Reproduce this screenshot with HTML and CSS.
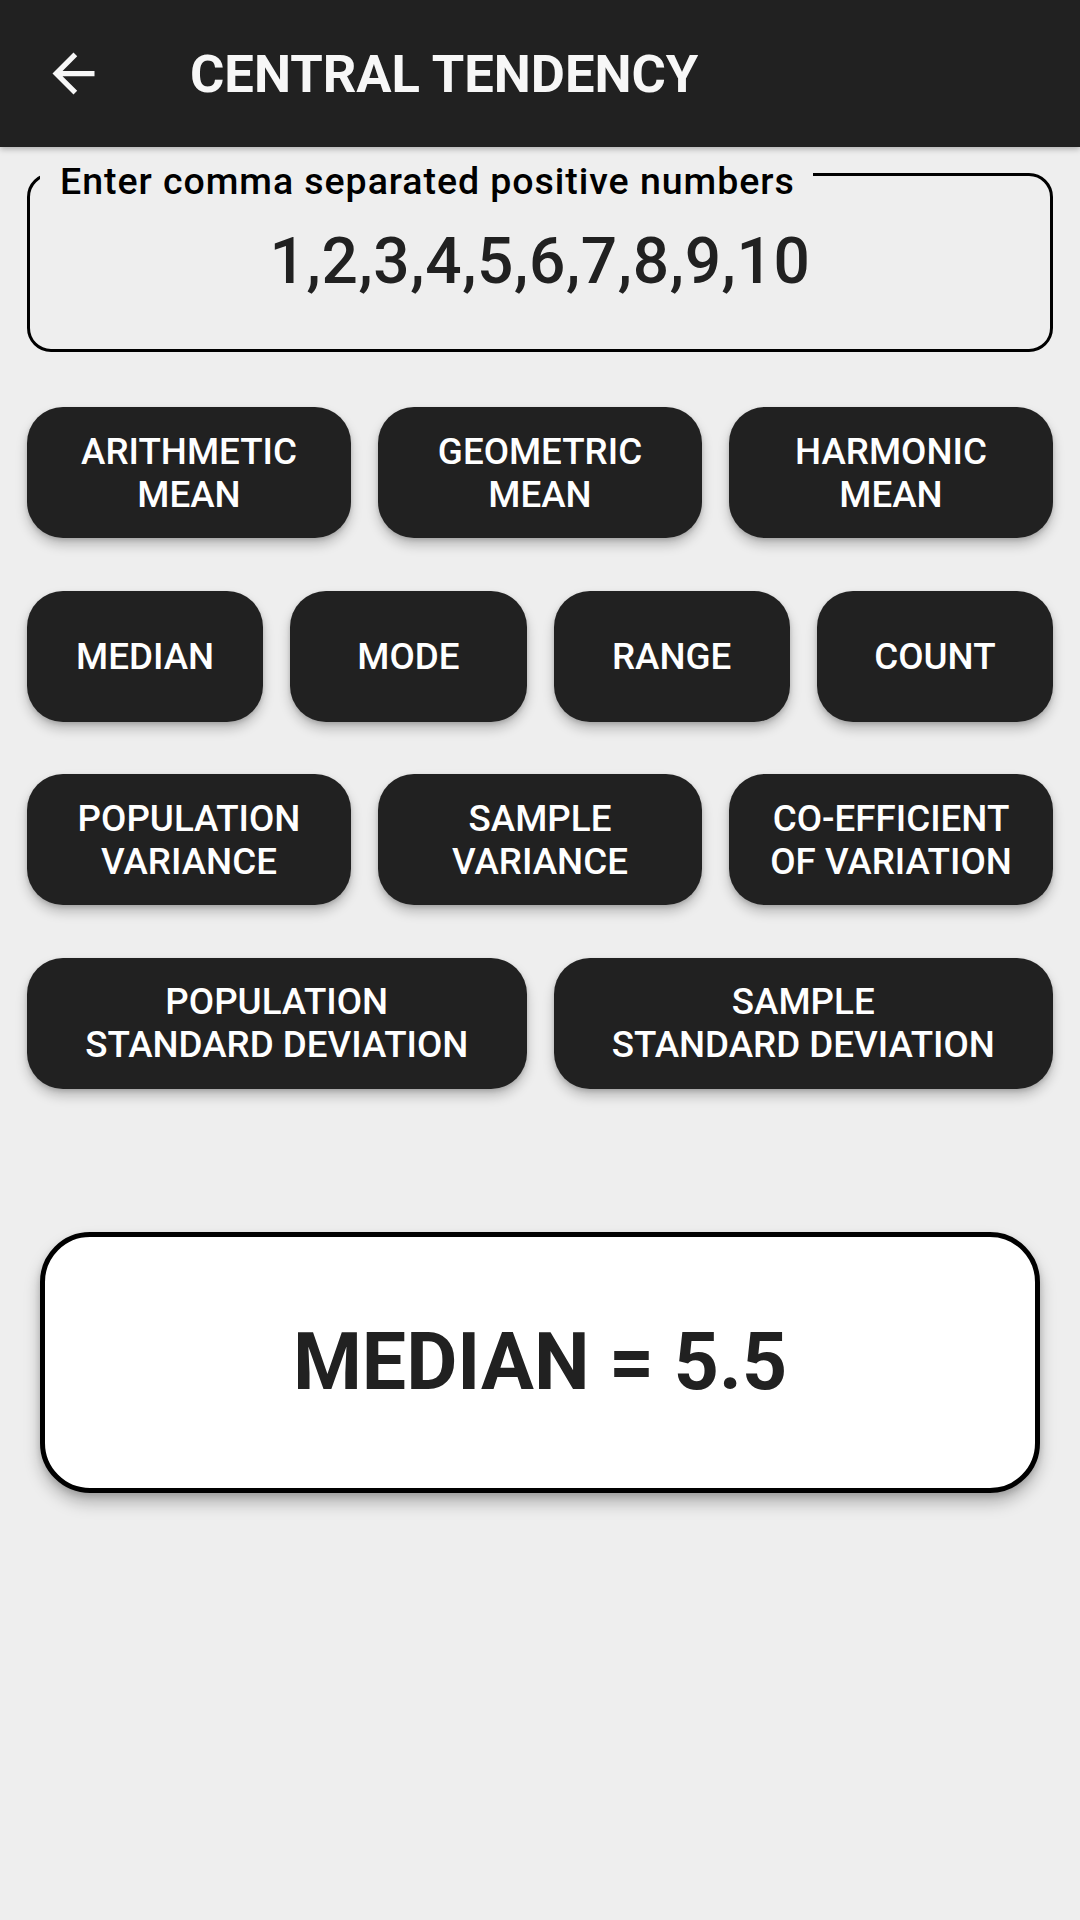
FILE: index.html
```html
<!DOCTYPE html>
<html lang="en">
<head>
<meta charset="utf-8">
<title>Central Tendency</title>
<link rel="stylesheet" href="styles.css">
</head>
<body>
<header class="toolbar">
  <button class="back" aria-label="Back">
    <svg viewBox="0 0 24 24" width="63" height="63"><path d="M20 11H7.83l5.59-5.59L12 4l-8 8 8 8 1.41-1.41L7.83 13H20v-2z" fill="#f7f7f7"/></svg>
  </button>
  <h1 class="title">CENTRAL TENDENCY</h1>
</header>
<main class="content">
  <div class="field">
    <span class="field-label">Enter comma separated positive numbers</span>
    <div class="field-value">1,2,3,4,5,6,7,8,9,10</div>
  </div>
  <div class="buttons">
    <div class="row">
      <button class="btn">ARITHMETIC<br>MEAN</button>
      <button class="btn">GEOMETRIC<br>MEAN</button>
      <button class="btn">HARMONIC<br>MEAN</button>
    </div>
    <div class="row">
      <button class="btn">MEDIAN</button>
      <button class="btn">MODE</button>
      <button class="btn">RANGE</button>
      <button class="btn">COUNT</button>
    </div>
    <div class="row">
      <button class="btn">POPULATION<br>VARIANCE</button>
      <button class="btn">SAMPLE<br>VARIANCE</button>
      <button class="btn">CO-EFFICIENT<br>OF VARIATION</button>
    </div>
    <div class="row">
      <button class="btn">POPULATION<br>STANDARD DEVIATION</button>
      <button class="btn">SAMPLE<br>STANDARD DEVIATION</button>
    </div>
  </div>
  <div class="result">MEDIAN = 5.5</div>
</main>
</body>
</html>
```
FILE: styles.css
```css
* { box-sizing: border-box; }
html, body {
  margin: 0;
  padding: 0;
  background: #eeeeee;
  font-family: Roboto, "Noto Sans", sans-serif;
}
body { width: 1080px; min-height: 1920px; }

.toolbar {
  height: 147px;
  background: #212121;
  display: flex;
  align-items: center;
  box-shadow: 0 2px 6px rgba(0,0,0,0.28);
  position: relative;
  z-index: 1;
}
.back {
  margin-left: 42px;
  width: 63px;
  height: 63px;
  padding: 0;
  border: 0;
  background: none;
  display: block;
}
.back svg { display: block; }
.title {
  margin: 0 0 0 85px;
  color: #f7f7f7;
  font-size: 52.5px;
  font-weight: 700;
  line-height: 1;
  padding-top: 2px;
}

.content {
  padding: 26px 27px 0;
}

.field {
  position: relative;
  height: 179px;
  border: 3px solid #000;
  border-radius: 24px;
  padding-top: 48px;
}
.field-label {
  position: absolute;
  top: -16px;
  left: 10px;
  padding: 0 18px 0 20px;
  background: #eeeeee;
  color: #000;
  font-size: 37.5px;
  line-height: 43px;
  font-weight: 500;
  letter-spacing: 0.95px;
}
.field-value {
  text-align: center;
  color: #212121;
  font-size: 64px;
  line-height: 75px;
  font-weight: 500;
  letter-spacing: 0.6px;
}

.buttons {
  margin-top: 55px;
  display: flex;
  flex-direction: column;
  gap: 52.5px;
}
.row {
  display: flex;
  gap: 27px;
}
.btn {
  flex: 1;
  height: 131px;
  border: 0;
  border-radius: 36px;
  background: #212121;
  color: #fff;
  font-family: Roboto, "Noto Sans", sans-serif;
  font-size: 36.75px;
  font-weight: 500;
  line-height: 43px;
  text-align: center;
  padding: 0;
  box-shadow: 0 7px 12px rgba(0,0,0,0.22), 0 2px 4px rgba(0,0,0,0.14);
}

.result {
  margin: 143px 13px 0;
  height: 261px;
  border: 5px solid #000;
  border-radius: 50px;
  background: #fff;
  display: flex;
  align-items: center;
  justify-content: center;
  color: #212121;
  font-size: 78.75px;
  font-weight: 700;
  box-shadow: 0 10px 16px rgba(0,0,0,0.25), 0 3px 6px rgba(0,0,0,0.15);
}
```
